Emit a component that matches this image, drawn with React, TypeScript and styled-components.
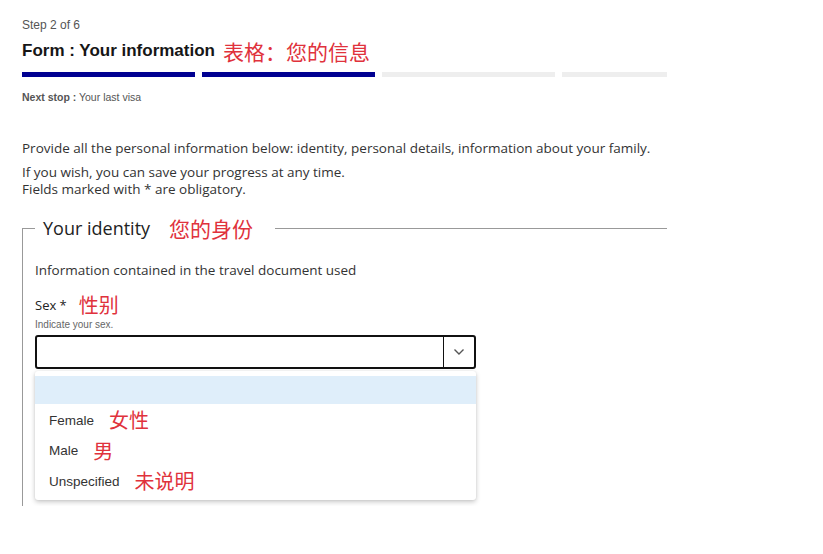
import styled, { createGlobalStyle } from "styled-components";

const GlobalStyle = createGlobalStyle`
  html, body {
    margin: 0;
    padding: 0;
    background: #ffffff;
  }
  body {
    font-family: "Liberation Sans", Arial, sans-serif;
    color: #222;
  }
`;

const CJK = `"Noto Sans CJK SC", sans-serif`;
const TEXT = `"Open Sans", "Liberation Sans", sans-serif`;

const Page = styled.div`
  width: 645px;
  padding: 18px 0 0 22px;
`;

const StepLabel = styled.div`
  font-size: 12px;
  line-height: 14px;
  color: #555;
`;

const Title = styled.h1`
  margin: 6px 0 0;
  display: flex;
  align-items: center;
  gap: 8px;
  font-size: 17px;
  line-height: 26px;
  font-weight: 700;
  color: #161616;
`;

const Note = styled.span<{ $size?: number }>`
  font-family: ${CJK};
  font-weight: 400;
  font-size: ${(p) => p.$size ?? 20}px;
  line-height: 1;
  color: #e0323c;
`;

const Progress = styled.div`
  display: flex;
  gap: 7px;
  margin-top: 8px;
  overflow: hidden;
`;

const Segment = styled.div<{ $done?: boolean }>`
  flex: 0 0 173px;
  height: 5px;
  background: ${(p) => (p.$done ? "#000091" : "#eeeeee")};
`;

const NextStep = styled.div`
  margin-top: 14px;
  font-size: 10.5px;
  line-height: 12px;
  color: #555;
  b {
    font-weight: 700;
  }
`;

const Intro = styled.p`
  margin: 37px 0 0;
  font-family: ${TEXT};
  font-size: 13.5px;
  line-height: 16px;
  color: #333;
`;

const Hint = styled.div`
  margin-top: 8px;
  font-family: ${TEXT};
  font-size: 13.5px;
  line-height: 17px;
  color: #333;
`;

const Fieldset = styled.fieldset`
  margin: 16px 0 0;
  padding: 22px 0 137px 12px;
  border: none;
  border-top: 1px solid #999;
  border-left: 1px solid #999;
`;

const Legend = styled.legend`
  display: flex;
  align-items: center;
  gap: 19px;
  padding: 0 22px 0 8px;
  font-family: ${TEXT};
  font-size: 18px;
  line-height: 28px;
  color: #222;
`;

const Info = styled.div`
  margin-top: -2px;
  font-family: ${TEXT};
  font-size: 13.5px;
  line-height: 16px;
  color: #333;
`;

const FieldLabel = styled.div`
  margin-top: 16px;
  display: flex;
  align-items: center;
  gap: 12px;
  font-family: ${TEXT};
  font-size: 13px;
  line-height: 22px;
  color: #222;
`;

const FieldHint = styled.div`
  margin-top: 3px;
  font-size: 10px;
  line-height: 11px;
  color: #666;
`;

const SelectWrap = styled.div`
  position: relative;
  width: 441px;
  margin-top: 5px;
`;

const SelectBox = styled.div`
  display: flex;
  height: 34px;
  box-sizing: border-box;
  border: 2px solid #111;
  border-radius: 3px;
  background: #fff;
`;

const SelectValue = styled.div`
  flex: 1;
  border-right: 1px solid #111;
`;

const SelectArrow = styled.div`
  width: 30px;
  display: flex;
  align-items: center;
  justify-content: center;
`;

const Menu = styled.ul`
  position: absolute;
  top: 36px;
  left: 0;
  right: 0;
  margin: 0;
  padding: 5px 0 3px;
  list-style: none;
  background: #fff;
  border-radius: 3px;
  box-shadow: 0 2px 5px rgba(0, 0, 0, 0.22), 0 0 2px rgba(0, 0, 0, 0.08);
`;

const Option = styled.li<{ $active?: boolean }>`
  display: flex;
  align-items: center;
  gap: 15px;
  height: ${(p) => (p.$active ? 28 : 30.5)}px;
  padding-left: 14px;
  font-size: 13.5px;
  color: #333;
  background: ${(p) => (p.$active ? "#dfeefa" : "transparent")};
  &:nth-child(2) {
    margin-top: 1px;
  }
`;

const options = [
  { label: "Female", note: "女性" },
  { label: "Male", note: "男" },
  { label: "Unspecified", note: "未说明" },
];

export default function App() {
  return (
    <>
      <GlobalStyle />
      <Page>
        <StepLabel>Step 2 of 6</StepLabel>
        <Title>
          Form : Your information <Note $size={21}>表格：您的信息</Note>
        </Title>
        <Progress>
          <Segment $done />
          <Segment $done />
          <Segment />
          <Segment />
        </Progress>
        <NextStep>
          <b>Next stop :</b> Your last visa
        </NextStep>

        <Intro>
          Provide all the personal information below: identity, personal details, information about your family.
        </Intro>
        <Hint>
          <div>If you wish, you can save your progress at any time.</div>
          <div>Fields marked with * are obligatory.</div>
        </Hint>

        <Fieldset>
          <Legend>
            Your identity <Note $size={21}>您的身份</Note>
          </Legend>
          <Info>Information contained in the travel document used</Info>
          <FieldLabel>
            Sex * <Note>性别</Note>
          </FieldLabel>
          <FieldHint>Indicate your sex.</FieldHint>
          <SelectWrap>
            <SelectBox>
              <SelectValue />
              <SelectArrow>
                <svg width="12" height="8" viewBox="0 0 12 8" fill="none">
                  <path d="M1.5 1.5 L6 6 L10.5 1.5" stroke="#555" strokeWidth="1.4" />
                </svg>
              </SelectArrow>
            </SelectBox>
            <Menu>
              <Option $active />
              {options.map((o) => (
                <Option key={o.label}>
                  {o.label} <Note>{o.note}</Note>
                </Option>
              ))}
            </Menu>
          </SelectWrap>
        </Fieldset>
      </Page>
    </>
  );
}
